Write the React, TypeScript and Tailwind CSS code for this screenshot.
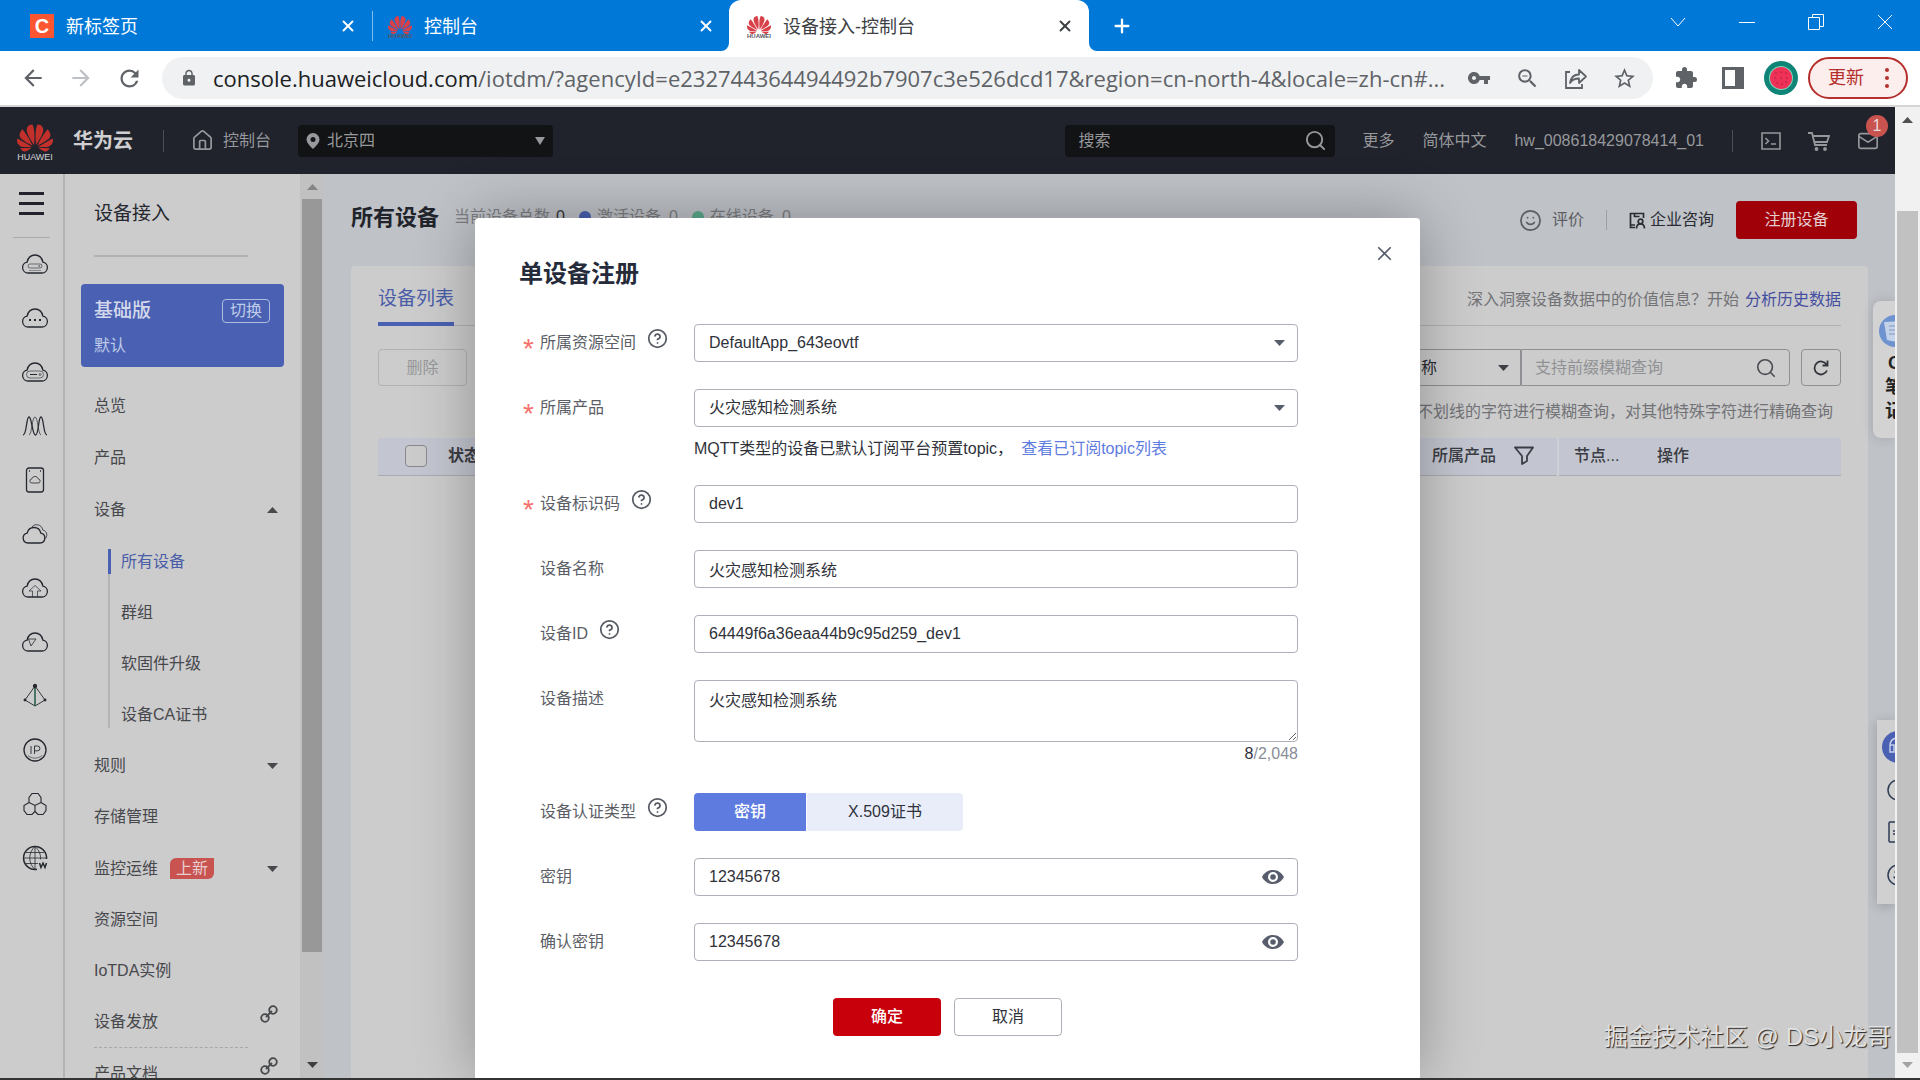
import type { ReactNode } from 'react'
import { HelpCircle, Home, Mail, Plus, Search, Smile, X } from 'lucide-react'
import {
  MdArrowBack,
  MdArrowForward,
  MdExtension,
  MdLock,
  MdRefresh,
  MdStarBorder,
  MdVpnKey,
  MdZoomOut
} from 'react-icons/md'
import { SiHuawei } from 'react-icons/si'

interface BrowserTabProps {
  icon: ReactNode
  title: string
  className: string
}

function BrowserTab({ icon, title, className }: BrowserTabProps) {
  return (
    <div className={`flex h-full items-center gap-3 text-lg ${className}`}>
      {icon}
      <span className="flex-1 pt-[2px]">{title}</span>
      <button aria-label={`关闭 ${title}`}>
        <X className="size-[18px]" strokeWidth={2.5} />
      </button>
    </div>
  )
}

function HuaweiFavicon() {
  return (
    <span className="flex flex-col items-center">
      <SiHuawei className="size-6 text-[#d8404a]" />
      <span className="-mt-1 text-[6px] leading-[6px] font-bold text-[#5c5560]">HUAWEI</span>
    </span>
  )
}

function TabStrip() {
  return (
    <div className="flex h-[51px] shrink-0 items-center bg-[#0078d8] text-white">
      <BrowserTab
        title="新标签页"
        className="w-[372px] pr-[15px] pl-[30px]"
        icon={
          <span className="flex size-6 items-center justify-center bg-[#fc5531] text-xl font-bold">
            C
          </span>
        }
      />
      <span className="h-[30px] w-px bg-[#7fbdec]" />
      <BrowserTab title="控制台" className="w-[356px] pr-[14px] pl-[15px]" icon={<HuaweiFavicon />} />
      <div className="relative h-full w-[360px] rounded-t-xl bg-white text-[#3c4043]">
        <BrowserTab title="设备接入-控制台" className="pr-[15px] pl-[18px]" icon={<HuaweiFavicon />} />
        <span className="absolute bottom-0 -left-2 size-2 bg-white">
          <span className="block size-2 rounded-br-lg bg-[#0078d8]" />
        </span>
        <span className="absolute -right-2 bottom-0 size-2 bg-white">
          <span className="block size-2 rounded-bl-lg bg-[#0078d8]" />
        </span>
      </div>
      <button className="ml-[22px]" aria-label="新标签页">
        <Plus className="size-[22px]" strokeWidth={2.5} />
      </button>
      <div className="mr-[27px] mb-2 ml-auto flex gap-[53px]">
        <button aria-label="搜索标签页">
          <svg className="size-4" viewBox="0 0 16 16" fill="none" stroke="currentColor">
            <path d="M1 4l7 8 7-8" />
          </svg>
        </button>
        <button aria-label="最小化">
          <svg className="size-4" viewBox="0 0 16 16" stroke="currentColor">
            <path d="M0 8.5h16" />
          </svg>
        </button>
        <button aria-label="还原">
          <svg className="size-4" viewBox="0 0 16 16" fill="none" stroke="currentColor">
            <path d="M.5 3.5h11v12H.5zM4.5 3.5v-3h11v12h-4" />
          </svg>
        </button>
        <button aria-label="关闭">
          <svg className="size-4" viewBox="0 0 16 16" fill="none" stroke="currentColor">
            <path d="M1 1l14 14M15 1L1 15" />
          </svg>
        </button>
      </div>
    </div>
  )
}

function AddressBar() {
  return (
    <div className="flex h-14 shrink-0 items-center border-b-2 border-[#d6d6d8] bg-white pr-3 pl-5 text-[#5f6368]">
      <div className="flex gap-[22px]">
        <button aria-label="后退">
          <MdArrowBack className="size-[26px]" />
        </button>
        <button aria-label="前进" className="text-[#bdc1c6]">
          <MdArrowForward className="size-[26px]" />
        </button>
        <button aria-label="重新加载">
          <MdRefresh className="size-[27px]" />
        </button>
      </div>
      <div className="ml-[19px] flex h-[42px] min-w-0 flex-1 items-center rounded-full bg-[#eff1f2] pr-4 pl-[18px]">
        <MdLock className="size-[18px] shrink-0" />
        <p className="ml-[15px] flex-1 overflow-hidden [font-family:'Open_Sans',sans-serif] text-[22px] whitespace-nowrap">
          <span className="text-[#202124]">console.huaweicloud.com</span>
          /iotdm/?agencyId=e232744364494492b7907c3e526dcd17&amp;region=cn-north-4&amp;locale=zh-cn#...
        </p>
        <div className="ml-3 flex shrink-0 items-center gap-6">
          <button aria-label="密码">
            <MdVpnKey className="size-6" />
          </button>
          <button aria-label="缩放">
            <MdZoomOut className="size-[25px]" />
          </button>
          <button aria-label="分享">
            <svg className="size-6" viewBox="0 0 24 24" fill="none" stroke="currentColor" strokeWidth="1.8">
              <path d="M6 6H2v16h16v-4" />
              <path d="M6 17c1-6 4-8.5 9-8.5V4l7 6.5-7 6.5v-4.5c-4 0-7 1-9 4.5z" strokeLinejoin="round" />
            </svg>
          </button>
          <button aria-label="收藏">
            <MdStarBorder className="size-[25px]" />
          </button>
        </div>
      </div>
      <div className="ml-[21px] flex items-center gap-6">
        <button aria-label="扩展程序">
          <MdExtension className="size-6" />
        </button>
        <button aria-label="侧边栏">
          <svg className="size-[22px]" viewBox="0 0 22 22">
            <path d="M0 0h22v22H0zM3 3v16h10V3z" fill="currentColor" fillRule="evenodd" />
          </svg>
        </button>
      </div>
      <button className="ml-5" aria-label="个人资料">
        <svg className="size-[34px]" viewBox="0 0 34 34">
          <circle cx="17" cy="17" r="17" fill="#0f8577" />
          <circle cx="17" cy="17" r="12" fill="#7fd6b8" />
          <circle cx="17" cy="17" r="11" fill="#ef3158" />
          <g fill="#5c1330">
            <circle cx="12" cy="12" r=".6" />
            <circle cx="17" cy="11" r=".6" />
            <circle cx="22" cy="12" r=".6" />
            <circle cx="11" cy="17" r=".6" />
            <circle cx="17" cy="17" r=".6" />
            <circle cx="23" cy="17" r=".6" />
            <circle cx="13" cy="22" r=".6" />
            <circle cx="18" cy="23" r=".6" />
            <circle cx="22" cy="21" r=".6" />
          </g>
        </svg>
      </button>
      <button className="ml-[10px] flex h-[42px] items-center gap-[21px] rounded-full border-2 border-[#b5302c] bg-[#fceeed] pr-[17px] pl-[18px] text-lg text-[#b5302c]">
        更新
        <svg className="h-5 w-1" viewBox="0 0 4 20" fill="currentColor">
          <circle cx="2" cy="2" r="2" />
          <circle cx="2" cy="10" r="2" />
          <circle cx="2" cy="18" r="2" />
        </svg>
      </button>
    </div>
  )
}

function ConsoleHeader() {
  return (
    <header className="flex h-[67px] shrink-0 items-center bg-[#20232c] pr-4 pl-[17px] text-base text-[#97989b]">
      <a href="#home" className="flex items-center gap-5">
        <span className="flex flex-col items-center">
          <SiHuawei className="size-[36px] text-[#c2302c]" />
          <span className="-mt-1 text-[9px] leading-[10px] text-[#d5d5d6]">HUAWEI</span>
        </span>
        <span className="text-xl font-bold text-[#cfcfd1]">华为云</span>
      </a>
      <span className="ml-[30px] h-[22px] w-px bg-[#4b4d54]" />
      <a href="#console" className="ml-[27px] flex items-center gap-[9px]">
        <Home className="size-[23px]" strokeWidth={1.8} />
        控制台
      </a>
      <div className="relative ml-[27px] flex items-center">
        <svg className="absolute left-2 h-4 w-[14px]" viewBox="0 0 14 16" fill="currentColor">
          <path d="M7 0a6.500 6.500 0 0 0-6.500 6.500C.5 10.500 7 16 7 16s6.500-5.500 6.500-9.500A6.500 6.500 0 0 0 7 0zm0 9a2.500 2.500 0 1 1 0-5 2.500 2.500 0 0 1 0 5z" />
        </svg>
        <select aria-label="区域" className="h-8 w-[255px] appearance-none rounded-sm bg-[#121314] pl-[29px]">
          <option>北京四</option>
        </select>
        <svg className="absolute right-2 h-2 w-[10px]" viewBox="0 0 10 8" fill="currentColor">
          <path d="M0 0h10L5 8z" />
        </svg>
      </div>
      <div className="relative ml-auto flex items-center">
        <input
          type="text"
          aria-label="搜索"
          placeholder="搜索"
          className="h-8 w-[270px] rounded-sm bg-[#121314] pl-[13px] placeholder:text-[#97989b]"
        />
        <Search className="absolute right-2 size-[23px]" />
      </div>
      <nav className="ml-[27px] flex gap-7">
        <a href="#more">更多</a>
        <a href="#lang">简体中文</a>
        <a href="#account">hw_008618429078414_01</a>
      </nav>
      <span className="ml-7 h-[22px] w-px bg-[#4b4d54]" />
      <div className="ml-7 flex items-center gap-[27px]">
        <button aria-label="命令行">
          <svg className="size-5" viewBox="0 0 20 20" fill="none" stroke="currentColor" strokeWidth="1.6">
            <path d="M1 2h18v16H1zM4.500 7l3 3-3 3M10 13h5" />
          </svg>
        </button>
        <button aria-label="购物车">
          <svg className="size-[22px]" viewBox="0 0 22 22" fill="none" stroke="currentColor" strokeWidth="1.8">
            <path d="M0 3h4l3 12h12M5 6h16l-2 6H6.500" />
            <circle cx="8.5" cy="19" r="1" />
            <circle cx="17" cy="19" r="1" />
          </svg>
        </button>
        <button className="relative" aria-label="消息">
          <Mail className="size-[22px]" strokeWidth={1.8} />
          <span className="absolute -top-[15px] -right-[9px] flex size-[22px] items-center justify-center rounded-full bg-[#c9534f] text-[#e8d9d9]">
            1
          </span>
        </button>
      </div>
    </header>
  )
}

const CLOUD = 'M6 19h14a5.500 5.500 0 0 0 .9-10.900C20 3.800 17 1 13 1S6 3.800 5.100 8.100A5.500 5.500 0 0 0 6 19z'

const railIcons: { name: string; drawing: ReactNode }[] = [
  {
    name: '弹性云服务器',
    drawing: (
      <g transform="translate(0 3)">
        <path d={CLOUD} />
        <rect x="6" y="10" width="14" height="4" rx="2" strokeWidth=".6" />
        <path d="M16.500 12h1.500" strokeWidth="1" />
        <path d="M7 16.500h12" strokeWidth=".4" />
      </g>
    )
  },
  {
    name: '云耀服务器',
    drawing: (
      <g transform="translate(0 3)">
        <path d={CLOUD} />
        <path d="M7 12h2M12 12h2M17 12h2" strokeWidth="2" />
      </g>
    )
  },
  {
    name: '云硬盘',
    drawing: (
      <g transform="translate(0 3)">
        <path d={CLOUD} />
        <rect x="4.5" y="9" width="17" height="7" rx="3.5" strokeWidth=".6" />
        <path d="M8 12.500h7" strokeWidth="1" />
        <circle cx="18" cy="12.5" r="1" strokeWidth=".6" />
      </g>
    )
  },
  {
    name: '弹性伸缩',
    drawing: (
      <>
        <path d="M1 22C5 22 4 4 7 4s3 18 6.500 18S16 4 19 4s2 18 6 18" />
        <path d="M7 22c3-1 3-18 6-18s3 17 6 18" strokeWidth=".7" />
      </>
    )
  },
  {
    name: '存储',
    drawing: (
      <>
        <rect x="4.5" y="1" width="17" height="24" rx="2.5" />
        <path d="M7 4h1M18 4h1" strokeWidth="1.5" />
        <path d="M10 16h6a2 2 0 0 0 .3-4c-.5-1.500-1.500-2.500-3.300-2.500S10.200 10.500 9.700 12a2 2 0 0 0 .3 4z" strokeWidth=".8" />
      </>
    )
  },
  {
    name: '虚拟私有云',
    drawing: (
      <>
        <path d="M6 22h12a5 5 0 0 0 .8-9.900C18 8.500 15.500 6.500 12 6.500S6 8.500 5.200 12.100A5 5 0 0 0 6 22z" />
        <path d="M10 6c1.500-2 3.500-2.500 5.500-2.200 3 .4 4.800 2.400 5.300 5.200 4.500 1 5.500 6.500 1.500 9.500" strokeWidth=".8" />
      </>
    )
  },
  {
    name: '云备份',
    drawing: (
      <g transform="translate(0 3)">
        <path d={CLOUD} />
        <path d="M10.500 19v-6H7l6-5.500 6 5.500h-3.500v6" strokeWidth=".7" />
      </g>
    )
  },
  {
    name: '内容分发',
    drawing: (
      <g transform="translate(0 3)">
        <path d={CLOUD} />
        <path d="M6.500 7H14l-5 7z" strokeWidth=".8" />
      </g>
    )
  },
  {
    name: '负载均衡',
    drawing: (
      <>
        <path d="M13 3L3 17l10 6 10-6z" strokeWidth=".9" />
        <path d="M13 3v20" stroke="#1f5a45" strokeWidth="1.5" />
        <circle cx="13" cy="3" r="1.5" fill="currentColor" />
        <circle cx="3" cy="17" r=".8" />
        <circle cx="23" cy="17" r=".8" />
      </>
    )
  },
  {
    name: '弹性公网',
    drawing: (
      <>
        <circle cx="13" cy="13" r="11" />
        <path d="M9 9v8M12.500 17V9h3a2.300 2.300 0 0 1 0 4.800h-3" strokeWidth=".9" />
        <path d="M6 18.500c4 3.500 10 3.500 14 0" strokeWidth=".6" />
      </>
    )
  },
  {
    name: '容器',
    drawing: (
      <path
        d="M10 2.500h6l3 4v5l-6 3-6-3v-5zM7 11.500l-5 3v5l3 4h5l3-3v-6M19 11.500l5 3v5l-3 4h-5l-3-3"
        strokeWidth="1.100"
      />
    )
  },
  {
    name: '网站',
    drawing: (
      <>
        <path d="M15 24.300A11.500 11.500 0 1 1 24.500 14" strokeWidth="1.500" />
        <path d="M2 13h22M13 1.500v23M4 7.500h18M4 18.500h12M13 1.500c-7 6-7 17 0 23M13 1.500c4 3.500 6 8 5.500 13" strokeWidth=".8" />
        <path d="M17.500 18l1.500 4.500 2-4.500 2 4.500 1.500-4.500" strokeWidth="1.500" />
      </>
    )
  }
]

function ServiceRail() {
  return (
    <aside className="flex w-[65px] shrink-0 flex-col border-r-2 border-[#b4b4b5] pt-[18px]">
      <button aria-label="服务列表" className="ml-[19px] flex h-[23px] w-[25px] flex-col justify-between">
        <span className="h-[3px] w-full bg-[#22222c]" />
        <span className="h-[3px] w-full bg-[#22222c]" />
        <span className="h-[3px] w-full bg-[#22222c]" />
      </button>
      <span className="mx-[13px] mt-[22px] h-px shrink-0 bg-[#aaaaab]" />
      <div className="flex flex-col gap-7 pt-[13px] pl-[22px]">
        {railIcons.map((icon) => (
          <a key={icon.name} href="#service" aria-label={icon.name}>
            <svg
              className="size-[26px] text-[#25282f]"
              viewBox="0 0 26 26"
              fill="none"
              stroke="currentColor"
              strokeWidth="1.3"
            >
              {icon.drawing}
            </svg>
          </a>
        ))}
      </div>
    </aside>
  )
}

function Triangle({ up = false, className = '' }: { up?: boolean; className?: string }) {
  return (
    <svg className={`pointer-events-none h-[6px] w-[11px] ${className}`} viewBox="0 0 11 6" fill="currentColor">
      <path d={up ? 'M0 6h11L5.500 0z' : 'M0 0h11L5.500 6z'} />
    </svg>
  )
}

function ChainIcon() {
  return (
    <svg className="mb-4 size-[18px]" viewBox="0 0 18 18" fill="none" stroke="currentColor" strokeWidth="1.8">
      <circle cx="5" cy="13" r="3.8" />
      <circle cx="13" cy="5" r="3.8" />
      <path d="M6 12l6-6" />
    </svg>
  )
}

interface MenuRowProps {
  label: string
  tall?: boolean
  badge?: string
  end?: ReactNode
}

function MenuRow({ label, tall = false, badge, end }: MenuRowProps) {
  return (
    <a
      href="#menu"
      className={`flex shrink-0 items-center pr-[22px] pl-[29px] ${tall ? 'h-[52px]' : 'h-[51px]'}`}
    >
      {label}
      {badge && (
        <span className="ml-3 rounded-tl-md rounded-br-md bg-[#c95350] px-[6px] leading-[21px] text-[#e6cfcf]">
          {badge}
        </span>
      )}
      <span className="ml-auto">{end}</span>
    </a>
  )
}

function Sidebar() {
  const deviceItems = ['群组', '软固件升级', '设备CA证书']

  return (
    <aside className="flex w-[259px] shrink-0 text-base text-[#47484c]">
      <nav className="flex min-w-0 flex-1 flex-col overflow-hidden">
        <h2 className="ml-[29px] shrink-0 pt-[26px] text-[19px] leading-7 text-[#24272f]">设备接入</h2>
        <span className="mt-[27px] mr-[52px] ml-[29px] h-[2px] shrink-0 bg-[#b2b2b3]" />
        <div className="mt-[27px] mr-4 ml-4 h-[83px] shrink-0 rounded-sm bg-[#4a61b3] pt-[15px] pr-[14px] pl-[13px] text-[#bfcbe8]">
          <div className="flex items-center justify-between">
            <span className="text-[19px] leading-6 font-medium text-[#d3d9ea]">基础版</span>
            <button className="h-6 rounded-sm border border-[#aebce0] px-[7px] leading-[22px]">切换</button>
          </div>
          <p className="mt-[11px] leading-6">默认</p>
        </div>
        <div className="mt-[13px] flex flex-col">
          <MenuRow label="总览" tall />
          <MenuRow label="产品" tall />
          <MenuRow label="设备" tall end={<Triangle up />} />
          <div className="ml-[43px] flex flex-col">
            <a href="#all" className="flex h-[51px] items-center text-[#4a5da8]">
              <span className="h-[25px] w-[3px] bg-[#4a61b3]" />
              <span className="ml-[10px]">所有设备</span>
            </a>
            <div className="-mt-[13px] mb-3 border-l-2 border-[#b4b4b5] pt-[13px]">
              {deviceItems.map((item, i) => (
                <a
                  key={item}
                  href="#device"
                  className={`flex items-center pl-[11px] ${i === 2 ? 'h-[39px] pt-3' : 'h-[51px]'}`}
                >
                  {item}
                </a>
              ))}
            </div>
          </div>
          <MenuRow label="规则" end={<Triangle />} />
          <MenuRow label="存储管理" tall />
          <MenuRow label="监控运维" badge="上新" end={<Triangle />} />
          <MenuRow label="资源空间" />
          <MenuRow label="IoTDA实例" />
          <MenuRow label="设备发放" end={<ChainIcon />} />
          <span className="mr-[52px] ml-[29px] border-t border-dashed border-[#a8a8a9]" />
          <MenuRow label="产品文档" end={<ChainIcon />} />
        </div>
      </nav>
      <div className="flex w-6 flex-col items-center bg-[#c1c1c2] pt-[10px] pb-[10px]">
        <Triangle up className="text-[#858585]" />
        <span className="mt-[9px] mb-[110px] w-5 flex-1 bg-[#989899]" />
        <Triangle className="text-[#3f3f3f]" />
      </div>
    </aside>
  )
}

function DeviceHeading() {
  return (
    <div className="flex h-[92px] items-center pr-[11px]">
      <h1 className="mb-[6px] text-[22px] font-bold text-[#22242b]">所有设备</h1>
      <div className="mb-[6px] ml-[15px] flex items-center text-[#7c7e82]">
        当前设备总数<span className="ml-[6px] text-[#33353a]">0</span>
        <span className="ml-[14px] size-3 rounded-full bg-[#4a61b3]" />
        <span className="ml-[6px]">激活设备</span>
        <span className="ml-2">0</span>
        <span className="ml-[14px] size-3 rounded-full bg-[#5bac8d]" />
        <span className="ml-[6px]">在线设备</span>
        <span className="ml-2">0</span>
      </div>
      <a href="#rate" className="ml-auto flex items-center gap-[10px] text-[#5b5d62]">
        <Smile className="size-[23px]" strokeWidth={1.8} />
        评价
      </a>
      <span className="ml-[22px] h-5 w-px bg-[#9c9ea3]" />
      <a href="#consult" className="ml-[22px] flex items-center gap-1 text-[#2a2c33]">
        <svg className="size-[17px]" viewBox="0 0 17 17" fill="none" stroke="currentColor" strokeWidth="1.7">
          <path d="M6 15.500H1.500V1.500h13V6M1 13h5M5.500 1.500v3h5" />
          <circle cx="11.5" cy="9.5" r="2.3" />
          <path d="M7.500 16.500c0-3 1.500-4.500 4-4.500s4 1.500 4 4.500" />
        </svg>
        企业咨询
      </a>
      <button className="ml-[22px] h-[38px] w-[121px] rounded-sm bg-[#a00109] text-[#e3cfd0]">
        注册设备
      </button>
    </div>
  )
}

function DeviceTable() {
  return (
    <table className="mt-[14px] w-full table-fixed border-b border-[#a9abb0] bg-[#c3c6d0] text-left text-[#3b3d44]">
      <colgroup>
        <col className="w-[55px]" />
        <col />
        <col className="w-[141px]" />
        <col className="w-[84px]" />
        <col className="w-[199px]" />
      </colgroup>
      <thead>
        <tr className="h-[37px]">
          <th className="pl-[27px]">
            <input
              type="checkbox"
              aria-label="全选"
              className="block size-[22px] appearance-none rounded-sm border border-[#88898e] bg-[#cbcbcc]"
            />
          </th>
          <th className="pl-[15px]">状态</th>
          <th className="border-r-2 border-[#cdcfd6] pl-[15px] font-medium">
            <span className="flex items-center justify-between pr-[23px]">
              所属产品
              <svg className="size-5" viewBox="0 0 20 20" fill="none" stroke="currentColor" strokeWidth="1.8">
                <path d="M1 1.500h18l-6 8.500v5l-5 3v-8z" strokeLinejoin="round" />
              </svg>
            </span>
          </th>
          <th className="pl-[15px] font-medium">节点...</th>
          <th className="pl-[15px] font-medium">操作</th>
        </tr>
      </thead>
    </table>
  )
}

function DevicePanel() {
  return (
    <section className="flex-1 rounded-t-sm bg-[#cccccc] px-[27px] text-[#727377]">
      <div className="flex h-[60px] justify-between border-b border-[#b0b1b3]">
        <button className="-mb-px border-b-4 border-[#4a61b3] pt-[10px] text-[19px] text-[#4a5da8]">
          设备列表
        </button>
        <p className="pt-[22px]">
          深入洞察设备数据中的价值信息？开始
          <a href="#history" className="ml-[6px] text-[#454fa0]">
            分析历史数据
          </a>
        </p>
      </div>
      <div className="mt-[23px] flex h-[37px]">
        <button className="w-[89px] rounded-sm border border-[#b1b1b2] text-[#97989a]">删除</button>
        <div className="relative ml-auto flex items-center">
          <select
            aria-label="查询条件"
            className="h-full w-[162px] appearance-none rounded-l-sm border border-[#8f9094] pl-[13px] text-[#2d2f36]"
          >
            <option>设备名称</option>
          </select>
          <Triangle className="absolute right-[12px] text-[#3e4046]" />
        </div>
        <div className="relative flex items-center">
          <input
            type="text"
            aria-label="查询"
            placeholder="支持前缀模糊查询"
            className="h-full w-[269px] rounded-r-sm border border-[#8f9094] pl-[13px] placeholder:text-[#909195]"
          />
          <Search className="absolute right-[13px] size-[22px] text-[#4b4d53]" strokeWidth={1.8} />
        </div>
        <button
          aria-label="刷新"
          className="ml-[11px] flex w-10 items-center justify-center rounded-sm border border-[#8f9094] text-[#33353c]"
        >
          <svg className="size-[18px]" viewBox="0 0 18 18" fill="none" stroke="currentColor" strokeWidth="1.8">
            <path d="M15 11.500A6.500 6.500 0 1 1 14.500 5.500M15.500 1.500v5h-5" />
          </svg>
        </button>
      </div>
      <p className="mt-[14px] mb-[13px] pr-2 text-right leading-6 whitespace-nowrap">
        不划线的字符进行模糊查询，对其他特殊字符进行精确查询
      </p>
      <DeviceTable />
    </section>
  )
}

interface FormRowProps {
  id: string
  label: string
  required?: boolean
  help?: boolean
  children: ReactNode
}

function FormRow({ id, label, required = false, help = false, children }: FormRowProps) {
  return (
    <div className="flex">
      <div className="relative flex h-[37px] w-[154px] shrink-0 items-center text-[#5b5e66]">
        {required && (
          <span className="absolute top-[11px] -left-[17px] text-[28px] leading-7 text-[#f66f6a]">*</span>
        )}
        <label htmlFor={id}>{label}</label>
        {help && <HelpCircle className="mb-2 ml-[11px] size-[21px] text-[#565a63]" strokeWidth={2} />}
      </div>
      <div className="w-[604px]">{children}</div>
    </div>
  )
}

function SelectBox({ id, value }: { id: string; value: string }) {
  return (
    <div className="relative flex items-center">
      <select
        id={id}
        className="h-[38px] w-full appearance-none rounded-sm border border-[#adb0b8] bg-white pl-[14px]"
      >
        <option>{value}</option>
      </select>
      <Triangle className="absolute right-[13px] text-[#575d6c]" />
    </div>
  )
}

function TextBox({ id, value }: { id: string; value: string }) {
  return (
    <input
      id={id}
      type="text"
      defaultValue={value}
      className="block h-[38px] w-full rounded-sm border border-[#adb0b8] bg-white pl-[14px]"
    />
  )
}

function SecretBox({ id, value }: { id: string; value: string }) {
  return (
    <div className="relative flex items-center">
      <TextBox id={id} value={value} />
      <button type="button" aria-label="显示密钥" className="absolute right-[14px] text-[#575d6c]">
        <svg className="h-[14px] w-[22px]" viewBox="0 0 22 14">
          <path
            d="M11 0C5.500 0 1.800 3.500 0 7c1.800 3.500 5.500 7 11 7s9.200-3.500 11-7c-1.800-3.500-5.500-7-11-7zm0 2a5 5 0 1 1 0 10 5 5 0 0 1 0-10z"
            fill="currentColor"
          />
          <circle cx="11" cy="7" r="2.8" fill="currentColor" />
        </svg>
      </button>
    </div>
  )
}

function RegisterDialog() {
  return (
    <form
      role="dialog"
      aria-label="单设备注册"
      className="relative w-[945px] rounded-t-sm bg-white px-[44px] pt-[38px] text-base text-[#2f323a] shadow-[0_0_60px_rgba(0,0,0,0.3)]"
    >
      <button type="button" aria-label="关闭" className="absolute top-[24px] right-[24px] text-[#575d6c]">
        <X className="size-[23px]" strokeWidth={1.8} />
      </button>
      <h2 className="text-2xl leading-9 font-bold text-[#252b3a]">单设备注册</h2>
      <div className="mt-8 ml-[21px] flex flex-col gap-[27px]">
        <FormRow id="space" label="所属资源空间" required help>
          <SelectBox id="space" value="DefaultApp_643eovtf" />
        </FormRow>
        <FormRow id="product" label="所属产品" required>
          <SelectBox id="product" value="火灾感知检测系统" />
          <p className="mt-[10px] mb-[-3px] leading-6">
            MQTT类型的设备已默认订阅平台预置topic，
            <a href="#topics" className="ml-2 text-[#5e7ce0]">
              查看已订阅topic列表
            </a>
          </p>
        </FormRow>
        <FormRow id="code" label="设备标识码" required help>
          <TextBox id="code" value="dev1" />
        </FormRow>
        <FormRow id="name" label="设备名称">
          <TextBox id="name" value="火灾感知检测系统" />
        </FormRow>
        <FormRow id="deviceId" label="设备ID" help>
          <TextBox id="deviceId" value="64449f6a36eaa44b9c95d259_dev1" />
        </FormRow>
        <FormRow id="description" label="设备描述">
          <textarea
            id="description"
            defaultValue="火灾感知检测系统"
            className="block h-[62px] w-full rounded-sm border border-[#adb0b8] pt-2 pl-[14px]"
          />
          <p className="text-right leading-6 text-[#8a8e99]">
            <span className="text-[#2f323a]">8</span>/2,048
          </p>
        </FormRow>
        <FormRow id="secretType" label="设备认证类型" help>
          <div className="flex h-[38px] gap-px">
            <button id="secretType" type="button" className="w-28 rounded-l-sm bg-[#5e7ce0] font-medium text-white">
              密钥
            </button>
            <button type="button" className="w-[156px] rounded-r-sm bg-[#e9edfa]">
              X.509证书
            </button>
          </div>
        </FormRow>
        <FormRow id="secret" label="密钥">
          <SecretBox id="secret" value="12345678" />
        </FormRow>
        <FormRow id="confirm" label="确认密钥">
          <SecretBox id="confirm" value="12345678" />
        </FormRow>
      </div>
      <div className="mt-[37px] flex justify-center gap-[13px]">
        <button type="button" className="h-[38px] w-[108px] rounded-sm bg-[#c7000b] font-medium text-white">
          确定
        </button>
        <button type="button" className="h-[38px] w-[108px] rounded-sm border border-[#adb0b8]">
          取消
        </button>
      </div>
    </form>
  )
}

function FloatingTools() {
  return (
    <>
      <div className="absolute top-[194px] right-0 h-[137px] w-[22px] overflow-hidden rounded-l-lg bg-[#d3d3d4] pt-[14px] pl-[6px] shadow-[0_0_12px_rgba(0,0,0,0.15)]">
        <svg className="h-8 w-8" viewBox="0 0 32 32">
          <circle cx="16" cy="16" r="16" fill="#6f93cf" />
          <path d="M5 7l19-1v18c-4 3-8 3-16 1z" fill="#c5d3ea" />
          <path d="M10 11h10M10 15h10M10 19h10" stroke="#8196bd" strokeWidth="1" />
        </svg>
        <p className="mt-1 flex w-12 flex-col pl-[6px] text-lg leading-6 font-bold text-[#232323]">
          <span className="pl-[3px]">C</span>
          <span>笔</span>
          <span>记</span>
        </p>
      </div>
      <div className="absolute top-[613px] right-0 flex h-[184px] w-[18px] flex-col gap-5 overflow-hidden bg-[#d0d0d1] pt-[11px] pl-[5px] text-[#2e3c54] shadow-[0_2px_12px_rgba(0,0,0,0.2)]">
        <svg className="-mb-1 h-8 w-8 shrink-0" viewBox="0 0 32 32" fill="none">
          <circle cx="16" cy="16" r="16" fill="#4a61b3" />
          <path d="M8 15c0-5 3-8 8-8s8 3 8 8v6h-3v-6M8 15v6h4v-7H8" stroke="#c4cde8" strokeWidth="1.5" />
        </svg>
        <svg className="ml-[5px] size-[22px] shrink-0" viewBox="0 0 22 22" fill="none" stroke="currentColor" strokeWidth="1.5">
          <circle cx="11" cy="11" r="10" />
        </svg>
        <svg className="ml-[5px] size-[22px] shrink-0" viewBox="0 0 22 22" fill="none" stroke="currentColor" strokeWidth="1.5">
          <rect x="2" y="1" width="18" height="20" rx="1" />
          <path d="M6 10h10M6 13h10" />
        </svg>
        <Smile className="ml-1 size-6 shrink-0" strokeWidth={1.5} />
      </div>
    </>
  )
}

export default function App() {
  return (
    <div className="flex h-screen flex-col overflow-hidden border-b-2 border-[#333333] [font-family:'Liberation_Sans','Noto_Sans_CJK_SC',sans-serif]">
      <TabStrip />
      <AddressBar />
      <div className="flex min-h-0 flex-1">
        <div className="relative flex min-w-0 flex-1 flex-col overflow-hidden">
          <ConsoleHeader />
          <div className="flex min-h-0 flex-1 bg-[#cccccc]">
            <ServiceRail />
            <Sidebar />
            <main className="flex min-w-0 flex-1 flex-col bg-[#bfc2c7] px-[27px] text-base">
              <DeviceHeading />
              <DevicePanel />
            </main>
          </div>
          <FloatingTools />
          <div className="absolute inset-0 flex justify-center overflow-hidden pt-[111px]">
            <RegisterDialog />
          </div>
          <p className="absolute right-1 bottom-[23px] text-[24px] leading-9 text-[#e2e2e2] [text-shadow:1px_1px_1px_#222]">
            掘金技术社区 @ DS小龙哥
          </p>
        </div>
        <div className="flex w-[25px] shrink-0 flex-col items-center bg-[#f1f1f1] pt-[10px] pb-[10px]">
          <Triangle up className="text-[#505050]" />
          <span className="mt-[88px] mb-[9px] w-[21px] flex-1 bg-[#c1c1c1]" />
          <Triangle className="text-[#a3a3a3]" />
        </div>
      </div>
    </div>
  )
}
